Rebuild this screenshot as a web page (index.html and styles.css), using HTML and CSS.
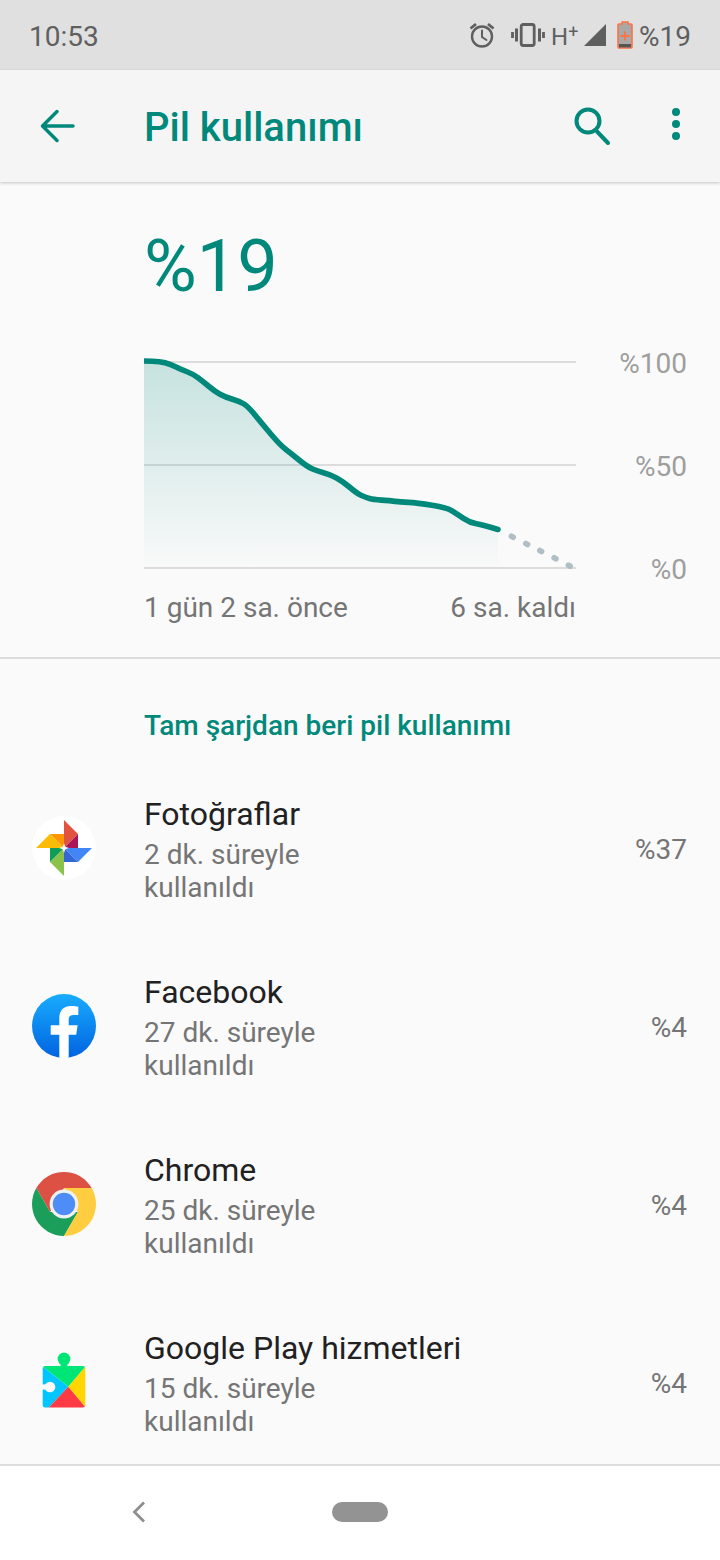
FILE: index.html
```html
<!DOCTYPE html>
<html lang="tr">
<head>
    <meta charset="UTF-8">
    <meta name="viewport" content="width=device-width, initial-scale=1.0">
    <title>Pil kullanımı</title>
    <link rel="stylesheet" href="styles.css">
</head>
<body>

<div class="status-bar">
    <span class="time">10:53</span>
    <div class="status-icons">
        <svg class="icon-alarm" width="28" height="28" viewBox="0 0 28 28" fill="none" stroke="#5f5f5f" stroke-width="2.4">
            <circle cx="14" cy="15.5" r="10"/>
            <path d="M14 9.5V16l4.5 3" stroke-linecap="round" stroke-width="2"/>
            <path d="M2.5 7.5 8 3M25.5 7.5 20 3" stroke-width="2.8"/>
        </svg>
        <svg class="icon-vibrate" width="34" height="24" viewBox="0 0 34 24" fill="none" stroke="#5f5f5f">
            <rect x="10.2" y="1.5" width="13" height="21" rx="2" stroke-width="2.8"/>
            <path d="M5.5 5.5v13M28.5 5.5v13" stroke-width="3"/>
            <path d="M1.5 9v6M32.5 9v6" stroke-width="2.8"/>
        </svg>
        <span class="network">H<sup>+</sup></span>
        <svg class="icon-signal" width="22" height="22" viewBox="0 0 22 22"><path d="M0 22 22 0V22Z" fill="#5f5f5f"/></svg>
        <svg class="icon-battery" width="16" height="28" viewBox="0 0 16 28">
            <path d="M5 1h6v2h3a1 1 0 0 1 1 1v22a1 1 0 0 1-1 1H2a1 1 0 0 1-1-1V4a1 1 0 0 1 1-1h3Z" fill="#a8a8a8" stroke="#ff7043" stroke-width="1.6"/>
            <rect x="2" y="23" width="12" height="3.4" fill="#555"/>
            <path d="M8 10.5v9M3.5 15h9" stroke="#ff7043" stroke-width="1.8"/>
        </svg>
        <span class="level">%19</span>
    </div>
</div>

<header class="app-bar">
    <svg class="app-bar-back" width="42" height="40" viewBox="0 0 42 40" fill="none" stroke="#00897b" stroke-width="3.5" stroke-linecap="round" stroke-linejoin="round">
        <path d="M35 20H5M19 5.5 4.5 20 19 34.5"/>
    </svg>
    <h1 class="app-bar-title">Pil kullanımı</h1>
    <svg class="app-bar-search" width="44" height="44" viewBox="0 0 44 44" fill="none" stroke="#00897b" stroke-width="4" stroke-linecap="round">
        <circle cx="17" cy="17" r="11.5"/>
        <path d="M26 27.5 37 39"/>
    </svg>
    <svg class="app-bar-more" width="10" height="34" viewBox="0 0 10 34" fill="#00897b">
        <circle cx="5" cy="5" r="4"/>
        <circle cx="5" cy="17" r="4"/>
        <circle cx="5" cy="29" r="4"/>
    </svg>
</header>

<main class="content">
    <section class="summary">
        <div class="summary-value">%19</div>
        <div class="chart-row">
            <svg class="chart" width="432" height="240" viewBox="144 346 432 240">
                <defs>
                    <linearGradient id="area-fill" x1="0" y1="0" x2="0" y2="1">
                        <stop offset="0" stop-color="#00897b" stop-opacity="0.21"/>
                        <stop offset="1" stop-color="#00897b" stop-opacity="0.01"/>
                    </linearGradient>
                </defs>
                <path d="M144 362H576M144 465H576M144 568H576" stroke="#dcdcdc" stroke-width="2"/>
                <path d="M144 361L152 361.25Q160 361.5 165 362.75Q170 364 175 366.5Q180 369 186.5 371.5Q193 374 198 377.75Q203 381.5 209 386.5Q215 391.5 220 394.25Q225 397 232.5 399.25Q240 401.5 244 404Q248 406.5 255 415Q262 423.5 271 434.25Q280 445 286.5 450Q293 455 300 460.75Q307 466.5 312 468.75Q317 471 323.5 472.75Q330 474.5 336.5 478Q343 481.5 350 487.5Q357 493.5 361.5 495.5Q366 497.5 369.5 498.5Q373 499.5 381.5 500.1Q390 500.7 395 501.35Q400 502 408.5 502.35Q417 502.7 432 505.2Q447 507.7 452 510.85Q457 514 463.5 518.35Q470 522.7 476.5 523.85Q483 525 490.5 527.25L498 529.5V564H144Z" fill="url(#area-fill)"/>
                <path d="M144 361L152 361.25Q160 361.5 165 362.75Q170 364 175 366.5Q180 369 186.5 371.5Q193 374 198 377.75Q203 381.5 209 386.5Q215 391.5 220 394.25Q225 397 232.5 399.25Q240 401.5 244 404Q248 406.5 255 415Q262 423.5 271 434.25Q280 445 286.5 450Q293 455 300 460.75Q307 466.5 312 468.75Q317 471 323.5 472.75Q330 474.5 336.5 478Q343 481.5 350 487.5Q357 493.5 361.5 495.5Q366 497.5 369.5 498.5Q373 499.5 381.5 500.1Q390 500.7 395 501.35Q400 502 408.5 502.35Q417 502.7 432 505.2Q447 507.7 452 510.85Q457 514 463.5 518.35Q470 522.7 476.5 523.85Q483 525 490.5 527.25L498 529.5" fill="none" stroke="#00897b" stroke-width="5.6" stroke-linejoin="round" stroke-linecap="round"/>
                <path d="M511.4 536.2 513.2 537.2M525.8 543.5 527.6 544.5M539.8 550.5 541.6 551.5M554.1 557.8 555.9 558.8M568.4 565.2 570.2 566.2" fill="none" stroke="#b0bec5" stroke-width="5.6" stroke-linecap="round"/>
            </svg>
            <div class="chart-scale">
                <span>%100</span>
                <span>%50</span>
                <span>%0</span>
            </div>
        </div>
        <div class="chart-times">
            <span>1 gün 2 sa. önce</span>
            <span>6 sa. kaldı</span>
        </div>
    </section>

    <section class="usage">
        <h2 class="usage-title">Tam şarjdan beri pil kullanımı</h2>

        <div class="app-row">
            <svg class="app-icon" width="64" height="64" viewBox="0 0 64 64">
                <circle cx="32" cy="32" r="32" fill="#fff"/>
                <path d="M32 32V4L46 18Z" fill="#e25241"/>
                <path d="M32 32 46 18V32Z" fill="#ad1457"/>
                <path d="M32 32H60L46 46Z" fill="#4285f4"/>
                <path d="M32 32 46 46H32Z" fill="#3367d6"/>
                <path d="M32 32V60L18 46Z" fill="#8bc34a"/>
                <path d="M32 32 18 46V32Z" fill="#0f9d58"/>
                <path d="M32 32H4L18 18Z" fill="#fbbc05"/>
                <path d="M32 32 18 18H32Z" fill="#ff9800"/>
                <path d="M32 27 33.2 30.8 37 32 33.2 33.2 32 37 30.8 33.2 27 32 30.8 30.8Z" fill="#fff"/>
            </svg>
            <div class="app-info">
                <div class="app-name">Fotoğraflar</div>
                <div class="app-detail">2 dk. süreyle<br>kullanıldı</div>
            </div>
            <div class="app-percent">%37</div>
        </div>

        <div class="app-row">
            <svg class="app-icon" width="64" height="64" viewBox="0 0 64 64">
                <defs>
                    <linearGradient id="fb-fill" x1="0" y1="0" x2="0" y2="1">
                        <stop offset="0" stop-color="#18acfe"/>
                        <stop offset="1" stop-color="#0163e0"/>
                    </linearGradient>
                </defs>
                <circle cx="32" cy="32" r="32" fill="url(#fb-fill)"/>
                <path d="M27.3 63.7V40.7H18.7V31.3H27.3V24C27.3 16 32 12 39 12 42 12 45 12.4 46.3 12.7V21H41.5C37.8 21 36.7 23 36.7 25.7V31.3H45.6L44.2 40.7H36.7V63.7Q32 64.3 27.3 63.7Z" fill="#fff"/>
            </svg>
            <div class="app-info">
                <div class="app-name">Facebook</div>
                <div class="app-detail">27 dk. süreyle<br>kullanıldı</div>
            </div>
            <div class="app-percent">%4</div>
        </div>

        <div class="app-row">
            <svg class="app-icon" width="64" height="64" viewBox="0 0 64 64">
                <path d="M4.3 16A32 32 0 0 1 59.7 16H32L18.1 40Z" fill="#dd5144"/>
                <path d="M4.3 16 18.1 40H45.9L32 64A32 32 0 0 1 4.3 16Z" fill="#1b9e5a"/>
                <path d="M59.7 16H32L45.9 40 32 64A32 32 0 0 0 59.7 16Z" fill="#ffcd40"/>
                <circle cx="32" cy="32" r="14.4" fill="#f1f1f1"/>
                <circle cx="32" cy="32" r="11.2" fill="#4e8df5"/>
            </svg>
            <div class="app-info">
                <div class="app-name">Chrome</div>
                <div class="app-detail">25 dk. süreyle<br>kullanıldı</div>
            </div>
            <div class="app-percent">%4</div>
        </div>

        <div class="app-row">
            <svg class="app-icon" width="64" height="64" viewBox="0 0 64 64">
                <defs>
                    <clipPath id="play-body">
                        <rect x="10.7" y="16" width="42.6" height="41.4" rx="2.5"/>
                    </clipPath>
                </defs>
                <circle cx="32" cy="9" r="6.4" fill="#00e676"/>
                <rect x="28.6" y="12" width="6.8" height="6" fill="#00e676"/>
                <g clip-path="url(#play-body)">
                    <path d="M10 16H54L36.3 36.7Z" fill="#00e676"/>
                    <path d="M10 16 36.3 36.7 16.3 58H10Z" fill="#00c6ff"/>
                    <path d="M54 16 36.3 36.7 54 58Z" fill="#ffd600"/>
                    <path d="M36.3 36.7 16.3 58H54Z" fill="#ff3a44"/>
                </g>
                <circle cx="18" cy="37" r="5.3" fill="#fafafa"/>
                <rect x="10" y="34.4" width="8" height="5.2" fill="#fafafa"/>
            </svg>
            <div class="app-info">
                <div class="app-name">Google Play hizmetleri</div>
                <div class="app-detail">15 dk. süreyle<br>kullanıldı</div>
            </div>
            <div class="app-percent">%4</div>
        </div>
    </section>
</main>

<nav class="nav-bar">
    <svg class="nav-back" width="14" height="22" viewBox="0 0 14 22" fill="none" stroke="#8e8e8e" stroke-width="2.8">
        <path d="M12 1.5 2.5 11 12 20.5"/>
    </svg>
    <div class="nav-home"></div>
</nav>

</body>
</html>
```

FILE: styles.css
```css
body {
    font-family: Roboto, sans-serif;
    margin: 0;
    padding: 0;
    width: 720px;
    height: 1560px;
    display: flex;
    flex-direction: column;
    overflow: hidden;
    background-color: #fafafa;
}
.status-bar {
    height: 70px;
    flex-shrink: 0;
    display: flex;
    align-items: center;
    justify-content: space-between;
    padding: 0 29px 0 29px;
    box-sizing: border-box;
    background-color: #e0e0e0;
    color: #5f5f5f;
}
.time {
    font-size: 28px;
    margin-top: 2px;
}
.status-icons {
    display: flex;
    align-items: center;
}
.icon-alarm {
    margin-right: 15px;
}
.icon-vibrate {
    margin-right: 6px;
}
.network {
    font-size: 24px;
    margin-top: 3px;
    margin-right: 7px;
    width: 26px;
}
.network sup {
    font-size: 18px;
    line-height: 0;
    vertical-align: 7px;
}
.icon-battery {
    margin-left: 11px;
    margin-right: 6px;
}
.level {
    font-size: 28px;
    margin-top: 3px;
}
.app-bar {
    height: 112px;
    flex-shrink: 0;
    display: flex;
    align-items: center;
    box-sizing: border-box;
    padding-left: 38px;
    background-color: #f5f5f5;
    box-shadow: 0 1px 3px rgba(0, 0, 0, 0.22);
    position: relative;
    z-index: 1;
}
.app-bar-title {
    margin: 2px 0 0 64px;
    flex: 1;
    font-size: 40px;
    font-weight: 500;
    color: #00897b;
}
.app-bar-search {
    margin-right: 56px;
}
.app-bar-more {
    margin-right: 39px;
    margin-bottom: 4px;
}
.content {
    flex: 1;
    overflow: hidden;
}
.summary {
    padding: 33px 0 32px 0;
    border-bottom: 2px solid #dcdcdc;
}
.summary-value {
    height: 100px;
    line-height: 104px;
    margin-left: 144px;
    font-size: 72px;
    color: #00897b;
}
.chart-row {
    display: flex;
    margin: 31px 33px 0 144px;
}
.chart {
    display: block;
    flex-shrink: 0;
}
.chart-scale {
    flex: 1;
    height: 240px;
    margin-top: 1px;
    display: flex;
    flex-direction: column;
    justify-content: space-between;
    text-align: right;
    font-size: 28px;
    line-height: 34px;
    color: #9e9e9e;
}
.chart-times {
    display: flex;
    justify-content: space-between;
    width: 432px;
    margin: 4px 0 0 144px;
    font-size: 28px;
    line-height: 34px;
    color: #757575;
}
.usage {
    padding-top: 50px;
}
.usage-title {
    margin: 0 0 17px 144px;
    font-size: 28px;
    line-height: 34px;
    font-weight: 500;
    color: #00897b;
}
.app-row {
    height: 178px;
    display: flex;
    align-items: center;
    padding: 0 33px 0 32px;
}
.app-icon {
    flex-shrink: 0;
    margin-right: 48px;
    margin-bottom: 2px;
}
.app-info {
    flex: 1;
}
.app-name {
    font-size: 32px;
    line-height: 40px;
    margin-bottom: 4px;
    color: #212121;
}
.app-detail {
    font-size: 28px;
    line-height: 33px;
    color: #757575;
}
.app-percent {
    font-size: 28px;
    color: #757575;
}
.nav-bar {
    height: 96px;
    flex-shrink: 0;
    display: flex;
    align-items: center;
    box-sizing: border-box;
    border-top: 2px solid #dcdcdc;
    padding: 0 0 2px 132px;
    background-color: #fff;
}
.nav-home {
    width: 56px;
    height: 20px;
    margin-left: 186px;
    border-radius: 10px;
    background-color: #939393;
}
```
